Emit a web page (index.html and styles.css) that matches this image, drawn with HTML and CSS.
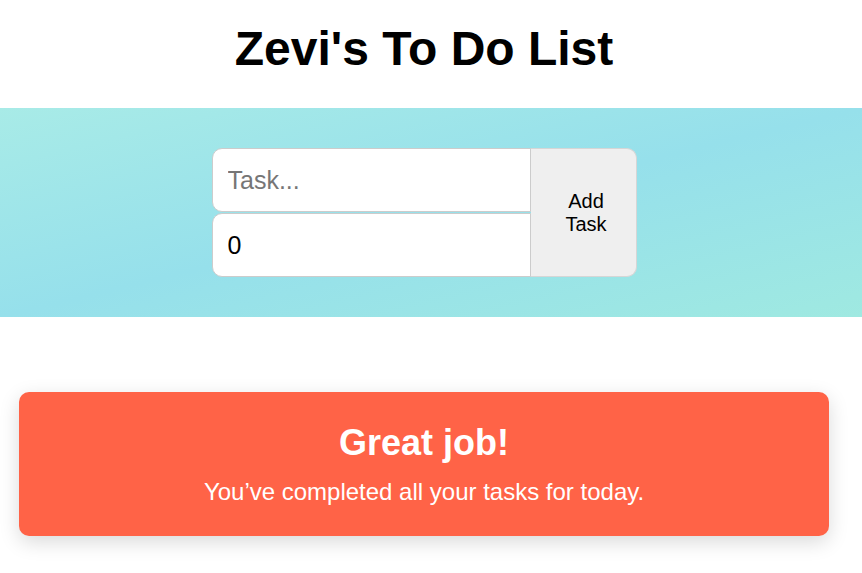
FILE: index.html
```html
<!DOCTYPE html>
<html lang="en">
<head>
<meta charset="utf-8">
<title>Zevi's To Do List</title>
<link rel="stylesheet" href="styles.css">
</head>
<body>
  <h1 class="title">Zevi's To Do List</h1>
  <section class="banner">
    <form class="task-form">
      <div class="fields">
        <input class="field field-top" type="text" placeholder="Task...">
        <input class="field field-bottom" type="number" value="0">
      </div>
      <button class="add-btn" type="button">Add Task</button>
    </form>
  </section>
  <div class="card">
    <h2 class="card-title">Great job!</h2>
    <p class="card-text">You’ve completed all your tasks for today.</p>
  </div>
</body>
</html>
```

FILE: styles.css
```css
* { box-sizing: border-box; }

body {
  margin: 0;
  padding-bottom: 37px;
  font-family: "Liberation Sans", Arial, sans-serif;
  background: #fff;
  color: #000;
}

.title {
  margin: 0;
  padding: 21px 14px 32px 0;
  font-size: 48px;
  font-weight: bold;
  text-align: center;
  line-height: 55px;
}

.banner {
  height: 209px;
  padding: 40px 14px 0 0;
  display: flex;
  justify-content: center;
  align-items: flex-start;
  background: linear-gradient(to right bottom, #a8ebe7 0%, #96e0eb 50%, #9fe9e1 100%);
}

.task-form {
  display: flex;
  width: 425px;
  height: 129px;
}

.fields {
  display: flex;
  flex-direction: column;
  gap: 1px;
  width: 319px;
}

.field {
  height: 64px;
  width: 100%;
  border: 1px solid #cccccc;
  background: #fff;
  padding: 0 15px;
  font-family: "Liberation Sans", Arial, sans-serif;
  font-size: 25px;
  color: #000;
  outline: none;
  -moz-appearance: textfield;
}

.field::-webkit-outer-spin-button,
.field::-webkit-inner-spin-button {
  -webkit-appearance: none;
  margin: 0;
}

.field::placeholder { color: #767676; }

.field-top { border-radius: 10px 0 0 10px; }
.field-bottom { border-radius: 10px 0 0 10px; }

.add-btn {
  width: 106px;
  height: 129px;
  border: 1px solid #d6d6d6;
  border-left: none;
  border-radius: 0 10px 10px 0;
  background: #efefef;
  font-family: "Liberation Sans", Arial, sans-serif;
  font-size: 20px;
  line-height: 23px;
  color: #000;
  padding: 0 16px 0 22px;
  cursor: pointer;
}

.card {
  margin: 75px 0 0 19px;
  width: 810px;
  height: 144px;
  background: #ff6347;
  border-radius: 10px;
  box-shadow: 0 6px 20px rgba(0, 0, 0, 0.15);
  color: #fff;
  text-align: center;
  padding-top: 30px;
}

.card-title {
  margin: 0;
  font-size: 36px;
  line-height: 41px;
  font-weight: bold;
}

.card-text {
  margin: 15px 0 0;
  font-size: 24px;
  line-height: 28px;
}
```
